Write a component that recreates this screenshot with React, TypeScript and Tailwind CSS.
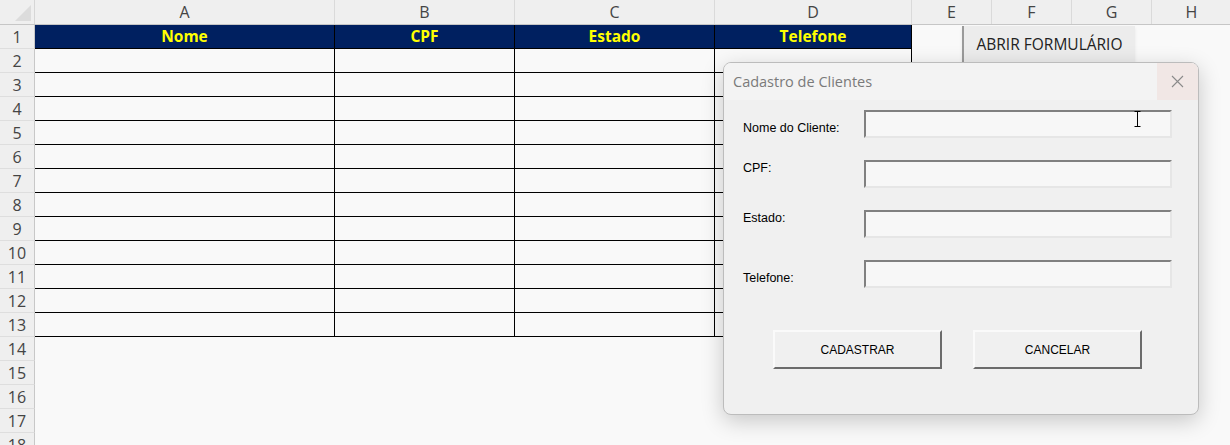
import React from 'react';

type Column = { key: string; width: string; title?: string };

const columns: Column[] = [
  { key: 'A', width: 'w-[300px]', title: 'Nome' },
  { key: 'B', width: 'w-[180px]', title: 'CPF' },
  { key: 'C', width: 'w-[200px]', title: 'Estado' },
  { key: 'D', width: 'w-[197px]', title: 'Telefone' },
  { key: 'E', width: 'w-[80px]' },
  { key: 'F', width: 'w-[80px]' },
  { key: 'G', width: 'w-[80px]' },
  { key: 'H', width: 'w-[80px]' },
];

const rows = Array.from({ length: 18 }, (_, i) => i + 1);

const fields = [
  { label: 'Nome do Cliente:', labelOffset: 'mt-[11px]' },
  { label: 'CPF:', labelOffset: 'mt-[1px]' },
  { label: 'Estado:', labelOffset: 'mt-[1px]' },
  { label: 'Telefone:', labelOffset: 'mt-[11px]' },
];

function SheetRow({ row }: { row: number }) {
  return (
    <div className="flex h-[24px] shrink-0">
      <div className="flex w-[35px] shrink-0 items-center justify-center border-r border-b border-r-[#c8c8c8] border-b-[#dedede] bg-[#efefef] text-[16px] text-[#444]">
        {row}
      </div>
      {columns.map((col) => {
        const inTable = col.title !== undefined && row <= 13;
        if (!inTable) {
          return <div key={col.key} className={`${col.width} shrink-0`} />;
        }
        if (row === 1) {
          return (
            <div
              key={col.key}
              className={`${col.width} flex shrink-0 items-center justify-center border-r border-b border-black bg-[#002060] text-[15.5px] font-bold text-[#ffff00]`}
            >
              {col.title}
            </div>
          );
        }
        return <div key={col.key} className={`${col.width} shrink-0 border-r border-b border-black`} />;
      })}
    </div>
  );
}

function TextBox() {
  return (
    <div className="h-[28px] w-[308px] border-t-2 border-l-2 border-r-2 border-b-2 border-t-[#808080] border-l-[#808080] border-r-[#e6e6e6] border-b-[#e6e6e6] bg-[#f7f7f7]" />
  );
}

function FormButton({ children }: { children: React.ReactNode }) {
  return (
    <button className="flex h-[39px] w-[169px] items-center justify-center border-t-2 border-l-2 border-r-2 border-b-2 border-t-[#fafafa] border-l-[#fafafa] border-r-[#6b6b6b] border-b-[#6b6b6b] bg-[#f0f0f0] text-[12px] text-black">
      {children}
    </button>
  );
}

function CadastroDialog() {
  return (
    <div className="absolute left-[723px] top-[62px] flex h-[353px] w-[476px] flex-col overflow-hidden rounded-lg border border-[#bcbcbc] bg-[#f0f0f0] shadow-[0_6px_22px_rgba(0,0,0,0.2)] [font-family:'Liberation_Sans',Arial,sans-serif]">
      <div className="flex h-[37px] shrink-0 items-center justify-between bg-[#f3f3f3]">
        <span className="pl-[9px] text-[14.5px] text-[#7a7a7a] [font-family:'Open_Sans',sans-serif]">
          Cadastro de Clientes
        </span>
        <div className="flex h-full w-[41px] items-center justify-center bg-[#f1e7e5]">
          <svg width="13" height="13" viewBox="0 0 13 13">
            <path d="M1 1L12 12M12 1L1 12" stroke="#8a8a8a" strokeWidth="1.1" />
          </svg>
        </div>
      </div>

      <div className="flex flex-col gap-[22px] pl-[19px] pt-[10px]">
        {fields.map((field, i) => (
          <div key={field.label} className="relative flex items-start">
            <span className={`w-[121px] text-[12.5px] leading-[15px] text-black ${field.labelOffset}`}>
              {field.label}
            </span>
            <TextBox />
            {i === 0 ? (
              <svg className="absolute left-[391px] top-[1px]" width="7" height="16" viewBox="0 0 7 16">
                <path d="M0.5 0.5H6.5M0.5 15.5H6.5M3.5 0.5V15.5" stroke="#000" strokeWidth="1" />
              </svg>
            ) : null}
          </div>
        ))}
      </div>

      <div className="mt-[42px] flex gap-[31px] pl-[49px]">
        <FormButton>CADASTRAR</FormButton>
        <FormButton>CANCELAR</FormButton>
      </div>
    </div>
  );
}

export default function App() {
  return (
    <div className="relative h-[445px] w-[1230px] overflow-hidden bg-[#f9f9f9] [font-family:'Open_Sans',sans-serif]">
      <div className="flex h-[25px] shrink-0 border-b border-[#c6c6c6] bg-[#efefef]">
        <div className="relative w-[35px] shrink-0 border-r border-[#d6d6d6]">
          <svg className="absolute right-[3px] bottom-[3px]" width="16" height="16" viewBox="0 0 16 16">
            <path d="M16 0V16H0Z" fill="#dcdcdc" />
          </svg>
        </div>
        {columns.map((col) => (
          <div
            key={col.key}
            className={`${col.width} flex shrink-0 items-center justify-center border-r border-[#dadada] text-[16px] text-[#444]`}
          >
            {col.key}
          </div>
        ))}
      </div>

      {rows.map((row) => (
        <SheetRow key={row} row={row} />
      ))}

      <div className="absolute left-[962px] top-[26px] flex h-[37px] w-[173px] items-center justify-center border-l-2 border-[#9a9a9a] bg-[#ececec] text-[15.5px] text-[#222] shadow-[0_2px_3px_rgba(0,0,0,0.08)]">
        ABRIR FORMULÁRIO
      </div>

      <CadastroDialog />
    </div>
  );
}
